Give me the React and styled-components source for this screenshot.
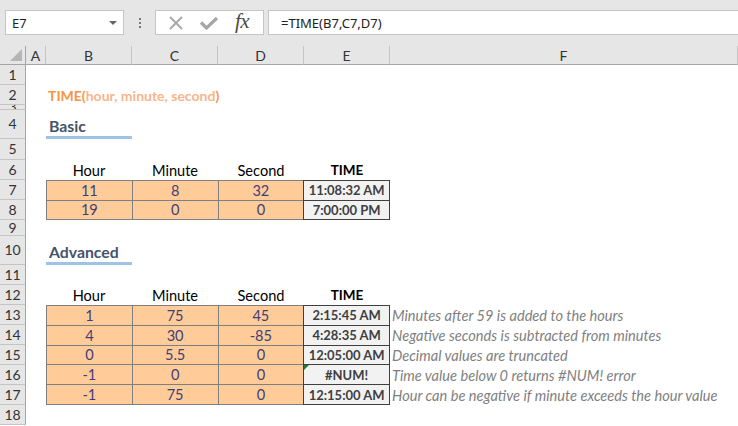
import React from 'react';
import styled, { createGlobalStyle } from 'styled-components';

const GlobalStyle = createGlobalStyle`
	html, body {
		margin: 0;
		padding: 0;
		background: #fff;
		overflow: hidden;
	}
	#root {
		width: 738px;
		height: 426px;
	}
`;

const CELL_FONT = `Lato, "Liberation Sans", sans-serif`;
const UI_FONT = `"Noto Sans", "Open Sans", sans-serif`;

// sheet rows 1..18, pixel heights as in the workbook
const ROW_HEIGHTS = [20, 20, 5, 29, 21, 20, 20, 20, 16, 29, 20, 20, 20, 20, 20, 20, 20, 20];
const COLUMNS = ['A', 'B', 'C', 'D', 'E', 'F'];

const basicRows = [
	[11, 8, 32, '11:08:32 AM'],
	[19, 0, 0, '7:00:00 PM'],
];

const advancedRows = [
	[1, 75, 45, '2:15:45 AM', 'Minutes after 59 is added to the hours'],
	[4, 30, -85, '4:28:35 AM', 'Negative seconds is subtracted from minutes'],
	[0, 5.5, 0, '12:05:00 AM', 'Decimal values are truncated'],
	[-1, 0, 0, '#NUM!', 'Time value below 0 returns #NUM! error', true],
	[-1, 75, 0, '12:15:00 AM', 'Hour can be negative if minute exceeds the hour value'],
];

const Window = styled.div`
	width: 738px;
	height: 426px;
	display: flex;
	flex-direction: column;
	overflow: hidden;
	background: #e6e6e6;
`;

const FormulaBar = styled.div`
	height: 46px;
	flex-shrink: 0;
	box-sizing: border-box;
	padding: 10px 0 0 5px;
	display: flex;
	align-items: flex-start;
`;

const Box = styled.div`
	height: 25px;
	box-sizing: border-box;
	background: #fff;
	border: 1px solid #c6c6c6;
	display: flex;
	align-items: center;
`;

const NameBox = styled(Box)`
	width: 119px;
	padding: 0 6px 0 6px;
	justify-content: space-between;
	font: 13px ${UI_FONT};
	color: #222;
`;

const Caret = styled.span`
	width: 0;
	height: 0;
	border-left: 4px solid transparent;
	border-right: 4px solid transparent;
	border-top: 4px solid #666;
`;

const Grip = styled.div`
	width: 31px;
	height: 25px;
	display: flex;
	flex-direction: column;
	align-items: center;
	justify-content: center;
	gap: 2px;
`;

const GripDot = styled.span`
	width: 2px;
	height: 2px;
	background: #777;
`;

const FxBox = styled(Box)`
	width: 109px;
	margin-right: 4px;
	padding-left: 13px;
	gap: 16px;
`;

const FxLabel = styled.span`
	font: italic 21px "Liberation Serif", serif;
	color: #4a4a4a;
	letter-spacing: -0.5px;
	margin-top: -3px;
`;

const FormulaInput = styled(Box)`
	flex: 1;
	border-right: none;
	padding-left: 12px;
	font: 13px ${UI_FONT};
	color: #222;
`;

const Sheet = styled.div`
	flex: 1;
	display: grid;
	grid-template-columns: 26px 20px 86px 86px 86px 86px 1fr;
	grid-template-rows: ${p => p.$rows};
	background: #fff;
	font-family: ${CELL_FONT};
	font-size: 14.6px;
`;

const ColHeader = styled.div`
	grid-row: 1;
	box-sizing: border-box;
	background: #e6e6e6;
	border-right: 1px solid #c4c4c4;
	border-bottom: 1px solid #a5a5a5;
	display: flex;
	align-items: center;
	justify-content: center;
	color: #333;
	font-size: 14px;
`;

const Corner = styled(ColHeader)`
	border-right: 1px solid #a5a5a5;
	align-items: flex-end;
	justify-content: flex-end;
	padding: 0 3px 3px 0;
`;

const RowHeader = styled.div`
	grid-column: 1;
	grid-row: ${p => p.$row + 1};
	box-sizing: border-box;
	background: #e6e6e6;
	border-right: 1px solid #a5a5a5;
	border-bottom: 1px solid #c4c4c4;
	display: flex;
	align-items: center;
	justify-content: center;
	overflow: hidden;
	color: #333;
	font-size: 14px;
	line-height: 1;
`;

const Cell = styled.div`
	grid-row: ${p => p.$row + 1};
	grid-column: ${p => p.$col} / span ${p => p.$span || 1};
	display: flex;
	align-items: center;
	justify-content: ${p => (p.$center ? 'center' : 'flex-start')};
	font-weight: ${p => (p.$bold ? 700 : 400)};
	font-size: ${p => (p.$bold ? '13.5px' : 'inherit')};
	color: #000;
	white-space: nowrap;
`;

const Title = styled(Cell)`
	padding-left: 2px;
	font-size: 14px;
	font-weight: 700;
	color: #f79646;
`;

const Args = styled.span`
	color: #f8b58a;
`;

const Heading = styled(Cell)`
	box-sizing: border-box;
	align-items: flex-end;
	padding: 0 0 1px 3px;
	border-bottom: 3px solid #9dc3e6;
	font-size: 15.8px;
	font-weight: 700;
	color: #44546a;
`;

const DataBlock = styled.div`
	grid-row: ${p => p.$row + 1} / span ${p => p.$count};
	grid-column: 3 / span 4;
	display: grid;
	grid-template-columns: repeat(4, 1fr);
	grid-auto-rows: 1fr;
	gap: 1px;
	border: 1px solid #7f7f7f;
	background: #7f7f7f;
`;

const InputCell = styled.div`
	background: #ffcc99;
	color: #3f3f76;
	display: flex;
	align-items: center;
	justify-content: center;
`;

const OutputCell = styled.div`
	position: relative;
	background: #f2f2f2;
	color: #3f3f3f;
	font-size: 13px;
	font-weight: 700;
	box-shadow: 0 0 0 1px #3f3f3f;
	display: flex;
	align-items: center;
	justify-content: center;

	&::before {
		content: '';
		display: ${p => (p.$flag ? 'block' : 'none')};
		position: absolute;
		top: 0;
		left: 0;
		border-top: 5px solid #1e7b34;
		border-right: 5px solid transparent;
	}
`;

const Note = styled(Cell)`
	padding-left: 2px;
	font-style: italic;
	color: #7f7f7f;
`;

const CrossIcon = () => (
	<svg width="14" height="14" viewBox="0 0 14 14">
		<path d="M1 1 L13 13 M13 1 L1 13" stroke="#a6a6a6" strokeWidth="1.8" fill="none" />
	</svg>
);

const CheckIcon = () => (
	<svg width="20" height="14" viewBox="0 0 20 14">
		<path d="M2 6.5 L7.5 12 L18 2" stroke="#a6a6a6" strokeWidth="3.2" fill="none" />
	</svg>
);

const CornerMark = () => (
	<svg width="12" height="12" viewBox="0 0 12 12">
		<polygon points="12,0 12,12 0,12" fill="#b5b5b5" />
	</svg>
);

const ColumnLabels = ({ row }) => (
	<>
		<Cell $row={row} $col={3} $center>Hour</Cell>
		<Cell $row={row} $col={4} $center>Minute</Cell>
		<Cell $row={row} $col={5} $center>Second</Cell>
		<Cell $row={row} $col={6} $center $bold>TIME</Cell>
	</>
);

const Table = ({ row, rows }) => (
	<DataBlock $row={row} $count={rows.length}>
		{rows.map((r, i) => (
			<React.Fragment key={i}>
				<InputCell>{r[0]}</InputCell>
				<InputCell>{r[1]}</InputCell>
				<InputCell>{r[2]}</InputCell>
				<OutputCell $flag={r[5]}>{r[3]}</OutputCell>
			</React.Fragment>
		))}
	</DataBlock>
);

export default function App() {
	const rowTracks = ['19px', ...ROW_HEIGHTS.map(h => h + 'px')].join(' ');
	return (
		<Window>
			<GlobalStyle />
			<FormulaBar>
				<NameBox>
					E7
					<Caret />
				</NameBox>
				<Grip>
					<GripDot />
					<GripDot />
					<GripDot />
				</Grip>
				<FxBox>
					<CrossIcon />
					<CheckIcon />
					<FxLabel>fx</FxLabel>
				</FxBox>
				<FormulaInput>=TIME(B7,C7,D7)</FormulaInput>
			</FormulaBar>
			<Sheet $rows={rowTracks}>
				<Corner>
					<CornerMark />
				</Corner>
				{COLUMNS.map(c => (
					<ColHeader key={c}>{c}</ColHeader>
				))}
				{ROW_HEIGHTS.map((_, i) => (
					<RowHeader key={i} $row={i + 1}>
						{i + 1}
					</RowHeader>
				))}

				<Title $row={2} $col={3} $span={4}>
					TIME(<Args>hour, minute, second</Args>)
				</Title>

				<Heading $row={4} $col={3}>Basic</Heading>
				<ColumnLabels row={6} />
				<Table row={7} rows={basicRows} />

				<Heading $row={10} $col={3}>Advanced</Heading>
				<ColumnLabels row={12} />
				<Table row={13} rows={advancedRows} />
				{advancedRows.map((r, i) => (
					<Note key={i} $row={13 + i} $col={7}>
						{r[4]}
					</Note>
				))}
			</Sheet>
		</Window>
	);
}
